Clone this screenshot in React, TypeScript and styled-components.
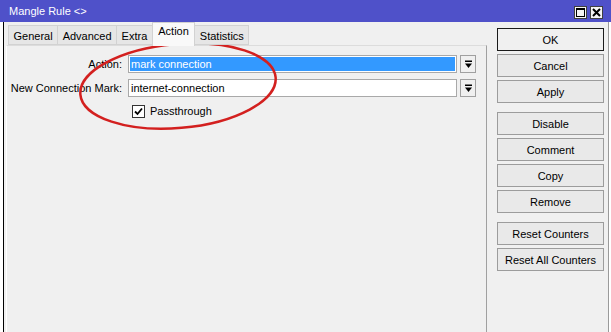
import styled, { createGlobalStyle } from 'styled-components';

const GlobalStyle = createGlobalStyle`
  html, body {
    margin: 0;
    padding: 0;
    background: #ffffff;
  }
  body {
    font-family: "Liberation Sans", Arial, sans-serif;
    font-size: 11px;
    color: #000;
  }
`;

const Window = styled.div`
  position: relative;
  width: 611px;
  height: 332px;
  display: flex;
  flex-direction: column;
  overflow: hidden;
`;

const TitleBar = styled.div`
  height: 22px;
  flex: none;
  background: #4f51c9;
  display: flex;
  align-items: center;
  justify-content: space-between;
  padding: 0 8px 0 9px;
  color: #fff;
  font-size: 11px;
`;

const TitleControls = styled.div`
  display: flex;
  gap: 3px;
  margin-top: 3px;
`;

const TitleButton = styled.div`
  width: 11px;
  height: 11px;
  border: 1px solid #404040;
  background: #f4f4f4;
  display: flex;
  align-items: center;
  justify-content: center;
`;

const Frame = styled.div`
  flex: 1;
  margin: 0 2px 0 3px;
  border-left: 1px solid #000;
  border-right: 1px solid #9a9a9a;
  background: #f0f0f0;
  display: flex;
`;

const MainPane = styled.div`
  width: 481px;
  padding-left: 2px;
  display: flex;
  flex-direction: column;
`;

const TabStrip = styled.div`
  height: 23px;
  display: flex;
  align-items: flex-end;
  padding-left: 2px;
  position: relative;
  z-index: 1;
`;

const Tab = styled.div<{ $active?: boolean }>`
  height: ${p => (p.$active ? 24 : 20)}px;
  margin-left: -1px;
  margin-bottom: ${p => (p.$active ? -1 : 0)}px;
  padding: ${p => (p.$active ? '2px 5.5px 0' : '4px 4.5px 0')};
  box-sizing: border-box;
  background: ${p => (p.$active ? '#f9f9f9' : '#e6e6e6')};
  border: 1px solid #d2d2d2;
  border-bottom: ${p => (p.$active ? 'none' : '1px solid #d2d2d2')};
  &:first-child {
    margin-left: 0;
  }
`;

const TabPanel = styled.div`
  flex: 1;
  border-top: 1px solid #dcdcdc;
  border-left: 1px solid #ffffff;
  border-right: 1px solid #a0a0a0;
  padding: 9px 0 0 0;
  display: flex;
  flex-direction: column;
  gap: 6px;
`;

const FieldRow = styled.div`
  height: 18px;
  display: flex;
  align-items: center;
`;

const Label = styled.div`
  width: 115px;
  padding-right: 6px;
  text-align: right;
  flex: none;
`;

const TextBox = styled.div`
  width: 329px;
  height: 18px;
  box-sizing: border-box;
  border: 1px solid #a9a9a9;
  background: #ffffff;
  padding: 1px;
  display: flex;
`;

const TextValue = styled.div<{ $selected?: boolean }>`
  flex: 1;
  background: ${p => (p.$selected ? '#3399ff' : 'transparent')};
  color: ${p => (p.$selected ? '#ffffff' : '#000000')};
  line-height: 15px;
  padding-left: 1px;
`;

const DropButton = styled.div`
  width: 16px;
  height: 18px;
  margin-left: 3px;
  box-sizing: border-box;
  border: 1px solid #a0a0a0;
  background: #f0f0f0;
  display: flex;
  align-items: center;
  justify-content: center;
`;

const CheckRow = styled.label`
  display: flex;
  align-items: center;
  height: 16px;
  padding-left: 125px;
  gap: 5px;
`;

const CheckBox = styled.span`
  width: 13px;
  height: 13px;
  box-sizing: border-box;
  border: 1px solid #333;
  background: #fff;
  display: flex;
  align-items: center;
  justify-content: center;
`;

const ButtonColumn = styled.div`
  flex: 1;
  padding: 6px 0 0 10px;
  display: flex;
  flex-direction: column;
`;

const ButtonGroup = styled.div`
  display: flex;
  flex-direction: column;
  gap: 3px;
  margin-bottom: 9px;
`;

const ActionButton = styled.button<{ $default?: boolean }>`
  width: 107px;
  height: 23px;
  padding: 0;
  font: inherit;
  color: #000;
  background: ${p => (p.$default ? '#f0f0f0' : '#e9e9e9')};
  border: 1px solid ${p => (p.$default ? '#1a1a1a' : '#9c9c9c')};
  border-radius: 0;
`;

const Annotation = styled.svg`
  position: absolute;
  left: 0;
  top: 0;
  pointer-events: none;
`;

const DropArrow = () => (
  <svg width="9" height="9" viewBox="0 0 9 9">
    <rect x="1" y="0.5" width="7" height="1.5" fill="#000" />
    <polygon points="1,3.5 8,3.5 4.5,8" fill="#000" />
  </svg>
);

const tabs = ['General', 'Advanced', 'Extra', 'Action', 'Statistics'];

const buttonGroups = [
  ['OK', 'Cancel', 'Apply'],
  ['Disable', 'Comment', 'Copy', 'Remove'],
  ['Reset Counters', 'Reset All Counters'],
];

export default function App() {
  return (
    <>
      <GlobalStyle />
      <Window>
        <TitleBar>
          <span>Mangle Rule &lt;&gt;</span>
          <TitleControls>
            <TitleButton>
              <svg width="9" height="9" viewBox="0 0 9 9">
                <rect x="0.5" y="0.5" width="8" height="8" fill="none" stroke="#000" />
                <rect x="0.5" y="0.5" width="8" height="1.5" fill="#000" />
              </svg>
            </TitleButton>
            <TitleButton>
              <svg width="9" height="9" viewBox="0 0 9 9">
                <path d="M1 1 L8 8 M8 1 L1 8" stroke="#000" strokeWidth="2" />
              </svg>
            </TitleButton>
          </TitleControls>
        </TitleBar>
        <Frame>
          <MainPane>
            <TabStrip>
              {tabs.map(t => (
                <Tab key={t} $active={t === 'Action'}>
                  {t}
                </Tab>
              ))}
            </TabStrip>
            <TabPanel>
              <FieldRow>
                <Label>Action:</Label>
                <TextBox>
                  <TextValue $selected>mark connection</TextValue>
                </TextBox>
                <DropButton>
                  <DropArrow />
                </DropButton>
              </FieldRow>
              <FieldRow>
                <Label>New Connection Mark:</Label>
                <TextBox>
                  <TextValue>internet-connection</TextValue>
                </TextBox>
                <DropButton>
                  <DropArrow />
                </DropButton>
              </FieldRow>
              <CheckRow>
                <CheckBox>
                  <svg width="9" height="9" viewBox="0 0 9 9">
                    <path d="M1 4.5 L3.5 7 L8 1.5" fill="none" stroke="#000" strokeWidth="1.8" />
                  </svg>
                </CheckBox>
                Passthrough
              </CheckRow>
            </TabPanel>
          </MainPane>
          <ButtonColumn>
            {buttonGroups.map((group, i) => (
              <ButtonGroup key={i}>
                {group.map(b => (
                  <ActionButton key={b} $default={b === 'OK'}>
                    {b}
                  </ActionButton>
                ))}
              </ButtonGroup>
            ))}
          </ButtonColumn>
        </Frame>
        <Annotation width="611" height="332">
          <ellipse
            cx="178"
            cy="86"
            rx="98"
            ry="42"
            transform="rotate(-5 178 86)"
            fill="none"
            stroke="#d3201f"
            strokeWidth="2.5"
          />
        </Annotation>
      </Window>
    </>
  );
}
